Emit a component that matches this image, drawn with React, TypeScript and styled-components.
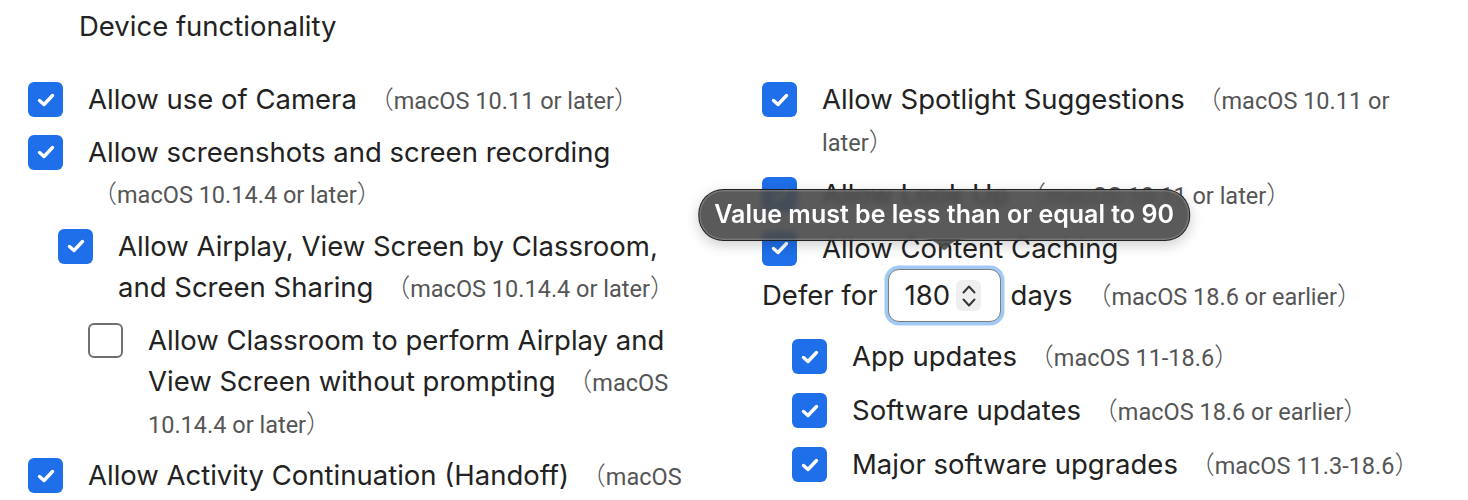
import React from 'react';
import styled, { createGlobalStyle } from 'styled-components';

const GlobalStyle = createGlobalStyle`
  html, body {
    margin: 0;
    padding: 0;
    background: #ffffff;
    overflow: hidden;
  }
  body {
    font-family: Inter, "Noto Sans", sans-serif;
    color: #222222;
  }
`;

const Page = styled.div`
  box-sizing: border-box;
  padding: 5px 0 0 28px;
  width: 1468px;
  height: 500px;
  overflow: hidden;
`;

const Heading = styled.h2`
  margin: 0 0 32px 51px;
  font-size: 27.5px;
  line-height: 42px;
  font-weight: 400;
  color: #222;
`;

const Columns = styled.div`
  display: grid;
  grid-template-columns: 672px 668px;
  column-gap: 62px;
  align-items: start;
`;

const Column = styled.div<{ $gap?: number }>`
  display: flex;
  flex-direction: column;
  gap: ${p => p.$gap ?? 11}px;
`;

const Row = styled.div<{ $indent?: number }>`
  display: flex;
  align-items: flex-start;
  gap: 25px;
  padding-left: ${p => (p.$indent ?? 0) * 30}px;
`;

const Box = styled.span<{ $checked: boolean }>`
  flex: none;
  width: 35px;
  height: 35px;
  margin-top: 3px;
  box-sizing: border-box;
  border-radius: 6px;
  display: flex;
  align-items: center;
  justify-content: center;
  background: ${p => (p.$checked ? '#1f6fea' : '#ffffff')};
  border: ${p => (p.$checked ? 'none' : '2px solid #707070')};
`;

const Label = styled.div`
  flex: 1;
  font-size: 27.5px;
  line-height: 41.5px;
  color: #222;
`;

const NoteText = styled.span`
  font-family: Roboto, "Noto Sans", sans-serif;
  font-size: 23.5px;
  line-height: 1;
  color: #555;
  margin-left: 4px;
`;

const Paren = styled.span`
  font-family: "Noto Sans CJK SC", "Noto Sans CJK JP", sans-serif;
  font-weight: 300;
  font-size: 25px;
  line-height: 1;
  color: #555;
`;

const DeferRow = styled.div`
  display: flex;
  align-items: center;
  gap: 10px;
  margin-top: -12px;
  font-size: 27.5px;
  line-height: 41.5px;
  color: #222;
`;

const InputWrap = styled.div`
  position: relative;
`;

const NumberBox = styled.div`
  width: 113px;
  height: 53px;
  box-sizing: border-box;
  border: 1.5px solid #7d7d7d;
  border-radius: 11px;
  box-shadow: 0 0 0 3.5px rgba(120, 180, 240, 0.7);
  display: flex;
  align-items: center;
  padding: 0 0 0 16px;
  gap: 6px;
  background: #fff;
`;

const NumberValue = styled.span`
  font-size: 27.5px;
  color: #222;
`;

const Stepper = styled.span`
  width: 25px;
  height: 31px;
  border-radius: 6px;
  background: #efefef;
  display: flex;
  align-items: center;
  justify-content: center;
`;

const Tooltip = styled.div`
  position: absolute;
  left: 50%;
  bottom: calc(100% + 28px);
  transform: translateX(-50%);
  white-space: nowrap;
  padding: 0 15px;
  height: 50px;
  display: flex;
  align-items: center;
  border-radius: 25px;
  background: rgba(72, 72, 72, 0.9);
  backdrop-filter: blur(3px);
  border: 1px solid rgba(20, 20, 20, 0.8);
  box-shadow: inset 0 0 0 1.5px rgba(255, 255, 255, 0.18), 0 4px 14px rgba(0, 0, 0, 0.2);
  color: #ffffff;
  font-size: 25px;
  font-weight: 600;
  z-index: 2;
`;

const TipArrow = styled.svg`
  position: absolute;
  left: 50%;
  top: 100%;
  margin-top: -1px;
  transform: translateX(-50%);
`;

const SubGroup = styled.div`
  display: flex;
  flex-direction: column;
  gap: 12.5px;
  margin-top: 2px;
`;

const Check = () => (
  <svg width="18" height="14" viewBox="0 0 18 14">
    <path d="M2.5 7.5 L7 11.5 L15.5 2.5" fill="none" stroke="#fff" strokeWidth="3.4" strokeLinecap="round" strokeLinejoin="round" />
  </svg>
);

const Note: React.FC<{ text: string; open?: boolean }> = ({ text, open = false }) => (
  <NoteText>
    <Paren>（</Paren>
    {text}
    {!open && <Paren>）</Paren>}
  </NoteText>
);

type ItemProps = {
  checked?: boolean;
  indent?: number;
  label?: string;
  note?: string;
  open?: boolean;
};

const Item: React.FC<ItemProps> = ({ checked = true, indent = 0, label, note, open }) => (
  <Row $indent={indent}>
    <Box $checked={checked}>{checked && <Check />}</Box>
    <Label>
      {label}
      {note && ' '}
      {note && <Note text={note} open={open} />}
    </Label>
  </Row>
);

const App: React.FC = () => {
  return (
    <>
      <GlobalStyle />
      <Page>
        <Heading>Device functionality</Heading>
        <Columns>
          <Column>
            <Item label="Allow use of Camera" note="macOS 10.11 or later" />
            <Item label="Allow screenshots and screen recording" note="macOS 10.14.4 or later" />
            <Item indent={1} label="Allow Airplay, View Screen by Classroom, and Screen Sharing" note="macOS 10.14.4 or later" />
            <Item indent={2} checked={false} label="Allow Classroom to perform Airplay and View Screen without prompting" note="macOS 10.14.4 or later" />
            <Item label="Allow Activity Continuation (Handoff)" note="macOS" open />
          </Column>

          <Column $gap={12}>
            <Item label="Allow Spotlight Suggestions" note="macOS 10.11 or later" />
            <Item label="Allow Look Up" note="macOS 10.11 or later" />
            <Item label="Allow Content Caching" />
            <DeferRow>
              <span>Defer for</span>
              <InputWrap>
                <Tooltip>
                  Value must be less than or equal to 90
                  <TipArrow width="46" height="13" viewBox="0 0 46 13">
                    <path d="M0 0 C10 0 16 3 20 9 Q23 13 26 9 C30 3 36 0 46 0 Z" fill="rgba(72,72,72,0.9)" />
                  </TipArrow>
                </Tooltip>
                <NumberBox>
                  <NumberValue>180</NumberValue>
                  <Stepper>
                    <svg width="16" height="28" viewBox="0 0 16 28">
                      <path d="M2.5 10.5 L8 4.5 L13.5 10.5 M2.5 17.5 L8 23.5 L13.5 17.5" fill="none" stroke="#333" strokeWidth="1.9" strokeLinecap="round" strokeLinejoin="round" />
                    </svg>
                  </Stepper>
                </NumberBox>
              </InputWrap>
              <span>days</span>
              <Note text="macOS 18.6 or earlier" />
            </DeferRow>
            <SubGroup>
              <Item indent={1} label="App updates" note="macOS 11-18.6" />
              <Item indent={1} label="Software updates" note="macOS 18.6 or earlier" />
              <Item indent={1} label="Major software upgrades" note="macOS 11.3-18.6" />
              <Item checked={false} />
            </SubGroup>
          </Column>
        </Columns>
      </Page>
    </>
  );
};

export default App;
